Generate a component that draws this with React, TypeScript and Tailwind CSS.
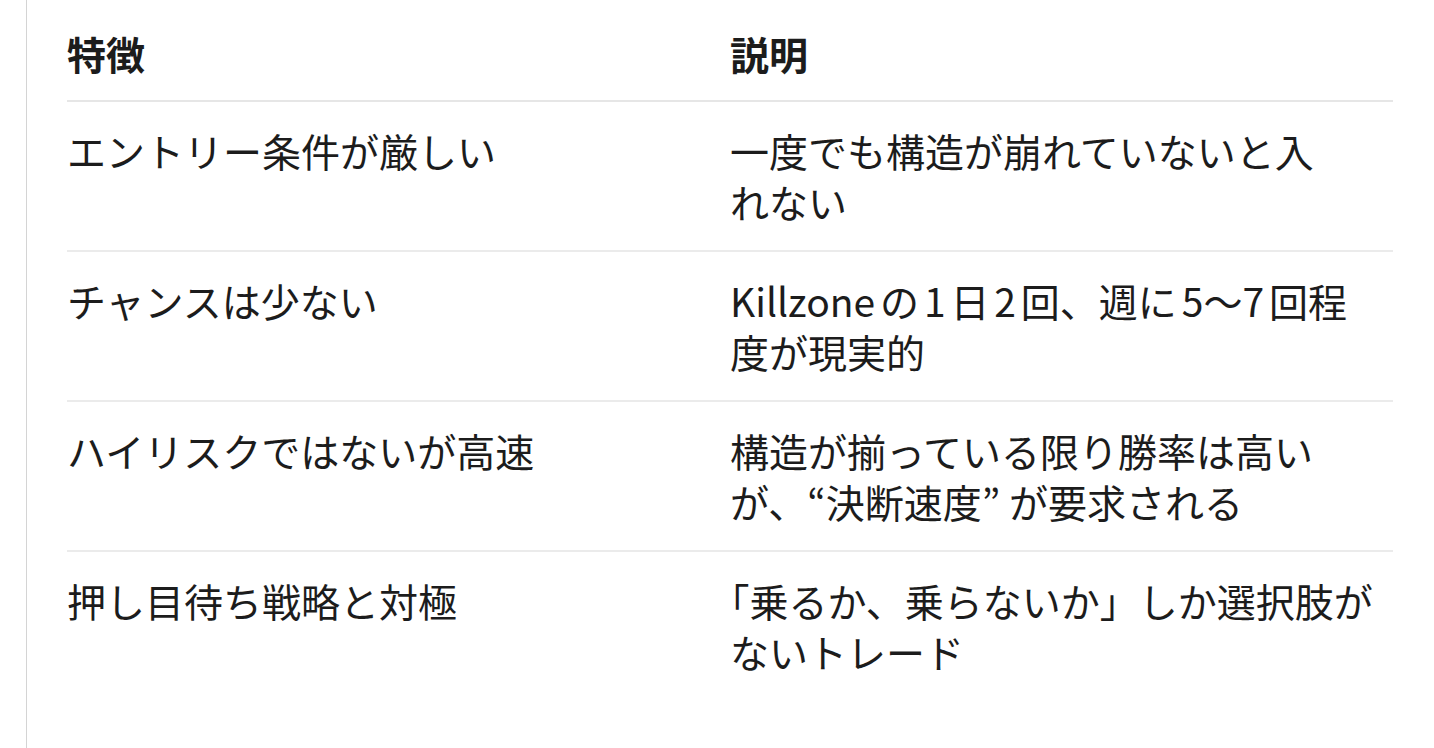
import React from "react";

type Row = {
  feature: string;
  lines: React.ReactNode[];
};

const rows: Row[] = [
  { feature: "エントリー条件が厳しい", lines: ["一度でも構造が崩れていないと入", "れない"] },
  { feature: "チャンスは少ない", lines: ["Killzoneの1日2回、週に5～7回程", "度が現実的"] },
  { feature: "ハイリスクではないが高速", lines: ["構造が揃っている限り勝率は高い", "が、“決断速度” が要求される"] },
  {
    feature: "押し目待ち戦略と対極",
    lines: [
      <>
        {/* opening bracket trimmed to half width at line start */}
        <span className="[font-feature-settings:'halt']">「</span>乗るか、乗らないか」しか選択肢が
      </>,
      "ないトレード",
    ],
  },
];

export default function App() {
  return (
    <div
      className="min-h-screen bg-white text-[#1c1c1c]"
      style={{ fontFamily: '"Noto Sans CJK JP", "Noto Sans", sans-serif' }}
    >
      <div className="ml-[26px] min-h-screen border-l border-[#d4d4d4] pl-[40px] pr-[41px]">
        <table className="w-full table-fixed border-collapse text-left text-[39px] leading-[51px] [text-autospace:normal]">
          <thead>
            <tr className="border-b-2 border-[#e6e6e6]">
              <th className="w-1/2 pt-[28px] pb-[21px] font-bold">特徴</th>
              <th className="w-1/2 pt-[28px] pb-[21px] font-bold">説明</th>
            </tr>
          </thead>
          <tbody>
            {rows.map((row, i) => (
              <tr
                key={row.feature}
                className={i < rows.length - 1 ? "border-b-2 border-[#ebebeb]" : ""}
              >
                <td className="py-[23px] align-top">{row.feature}</td>
                <td className="py-[23px] align-top whitespace-nowrap">
                  {row.lines[0]}
                  <br />
                  {row.lines[1]}
                </td>
              </tr>
            ))}
          </tbody>
        </table>
      </div>
    </div>
  );
}
